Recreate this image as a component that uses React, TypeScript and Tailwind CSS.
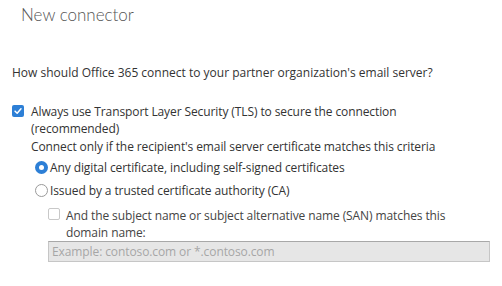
const font = { fontFamily: '"Open Sans", "Noto Sans", sans-serif' };

const CheckBox = ({ checked }: { checked: boolean }) =>
  checked ? (
    <span className="flex h-[12px] w-[12px] shrink-0 items-center justify-center rounded-[2px] bg-[#2d7fd6]">
      <svg viewBox="0 0 12 12" className="h-[10px] w-[10px]">
        <path d="M2.5 6.2 L5 8.6 L9.6 3.4" fill="none" stroke="white" strokeWidth="1.8" strokeLinecap="round" strokeLinejoin="round" />
      </svg>
    </span>
  ) : (
    <span className="block h-[12px] w-[12px] shrink-0 rounded-[2px] border border-[#c8c8c8] bg-white" />
  );

const Radio = ({ checked }: { checked: boolean }) =>
  checked ? (
    <span className="flex h-[13px] w-[13px] shrink-0 items-center justify-center rounded-full bg-[#2d7fd6]">
      <span className="h-[5px] w-[5px] rounded-full bg-white" />
    </span>
  ) : (
    <span className="block h-[13px] w-[13px] shrink-0 rounded-full border border-[#9a9a9a] bg-white" />
  );

export default function App() {
  return (
    <div className="h-[286px] w-[502px] overflow-hidden bg-white text-[#333]" style={font}>
      <div
        className="pl-[21px] pt-[3px] text-[17px] font-light leading-[24px] text-[#555]"
        style={{ fontFamily: 'Lato, "Open Sans", sans-serif' }}
      >
        New connector
      </div>

      <div className="pl-[12px] pt-[37px] text-[12px] leading-[18px] text-[#333]">
        How should Office 365 connect to your partner organization's email server?
      </div>

      <div className="mt-[21px] flex gap-[7px] pl-[12px] text-[12px] leading-[17px] tracking-[-0.1px]">
        <div className="pt-[2px]">
          <CheckBox checked />
        </div>
        <div>
          <div>Always use Transport Layer Security (TLS) to secure the connection</div>
          <div>(recommended)</div>
          <div className="mt-[1px]">Connect only if the recipient's email server certificate matches this criteria</div>
        </div>
      </div>

      <div className="mt-[4px] flex flex-col gap-[6px] pl-[35px] text-[12px] leading-[17px] tracking-[-0.1px]">
        <div className="flex items-center gap-[2px]">
          <Radio checked />
          <span>Any digital certificate, including self-signed certificates</span>
        </div>
        <div className="flex items-center gap-[2px]">
          <Radio checked={false} />
          <span>Issued by a trusted certificate authority (CA)</span>
        </div>
      </div>

      <div className="mt-[8px] flex gap-[6px] pl-[48px] pr-[12px] text-[12px] leading-[17px] tracking-[-0.1px]">
        <div className="pt-[1px]">
          <CheckBox checked={false} />
        </div>
        <div className="text-[#444]">
          <div>And the subject name or subject alternative name (SAN) matches this</div>
          <div>domain name:</div>
        </div>
      </div>

      <div className="ml-[48px] mr-[12px] mt-0 h-[21px] border border-[#c6c6c6] border-t-[#a8a8a8] bg-[#e6e6e6] pl-[3px] text-[12px] leading-[19px] tracking-[-0.1px] text-[#a6a6a6]">
        Example: contoso.com or *.contoso.com
      </div>
    </div>
  );
}
